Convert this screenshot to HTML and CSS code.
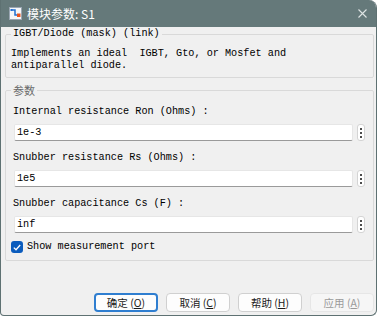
FILE: index.html
```html
<!DOCTYPE html>
<html>
<head>
    <title>模块参数: S1</title>
    <link rel="stylesheet" href="styles.css">
</head>
<body>
    <div class="window">
        <div class="titlebar">
            <svg class="app-icon" width="13" height="13" viewBox="0 0 13 13">
                <rect x="0.5" y="0.5" width="12" height="12" fill="#f4f6f8" stroke="#9aa6b2"/>
                <path d="M2 3 H6 V8 H8" fill="none" stroke="#1f6fd1" stroke-width="1.5"/>
                <rect x="1.5" y="2" width="2" height="2" fill="#1f6fd1"/>
                <rect x="8" y="6.5" width="3.5" height="3.5" fill="#e8541e"/>
            </svg>
            <span class="title">模块参数: S1</span>
            <svg class="close" width="9" height="9" viewBox="0 0 9 9">
                <path d="M0.5 0.5 L8.5 8.5 M8.5 0.5 L0.5 8.5" stroke="#dde3e3" stroke-width="1.1"/>
            </svg>
        </div>

        <div class="content">
            <fieldset class="group desc">
                <legend>IGBT/Diode (mask) (link)</legend>
                <div class="desc-text">Implements an ideal  IGBT, Gto, or Mosfet and<br>antiparallel diode.</div>
            </fieldset>

            <fieldset class="group params">
                <legend class="cjk-legend">参数</legend>

                <div class="param">
                    <div class="param-label">Internal resistance Ron (Ohms) :</div>
                    <div class="param-row">
                        <input class="param-input" type="text" value="1e-3">
                        <button class="more"><span></span><span></span><span></span></button>
                    </div>
                </div>

                <div class="param">
                    <div class="param-label">Snubber resistance Rs (Ohms) :</div>
                    <div class="param-row">
                        <input class="param-input" type="text" value="1e5">
                        <button class="more"><span></span><span></span><span></span></button>
                    </div>
                </div>

                <div class="param">
                    <div class="param-label">Snubber capacitance Cs (F) :</div>
                    <div class="param-row">
                        <input class="param-input" type="text" value="inf">
                        <button class="more"><span></span><span></span><span></span></button>
                    </div>
                </div>

                <label class="check">
                    <span class="box">
                        <svg width="8" height="7" viewBox="0 0 8 7">
                            <path d="M0.8 3.6 L3 5.8 L7.2 1" fill="none" stroke="#fff" stroke-width="1.3"/>
                        </svg>
                    </span>
                    Show measurement port
                </label>
            </fieldset>
        </div>

        <div class="footer">
            <button class="btn default">确定 (<u>O</u>)</button>
            <button class="btn">取消 (<u>C</u>)</button>
            <button class="btn">帮助 (<u>H</u>)</button>
            <button class="btn disabled">应用 (<u>A</u>)</button>
        </div>
    </div>
</body>
</html>
```

FILE: styles.css
```css
body {
    margin: 0;
    background: #ffffff;
}
.window {
    width: 377px;
    height: 316px;
    box-sizing: border-box;
    display: flex;
    flex-direction: column;
    background: #f0f0f0;
    border: 1px solid #5e7172;
    border-top: none;
    border-radius: 0 8px 6px 4px;
    overflow: hidden;
    font-family: "Liberation Mono", monospace;
    font-size: 10.2px;
    color: #000;
}
.titlebar {
    height: 27px;
    flex: none;
    display: flex;
    align-items: center;
    background: #65797a;
    padding-left: 9px;
    margin: 0 -1px;
}
.app-icon {
    flex: none;
}
.title {
    margin-left: 5px;
    color: #ffffff;
    font-family: "Noto Sans CJK SC", "Noto Sans", sans-serif;
    font-size: 12px;
}
.close {
    margin-left: auto;
    margin-right: 10px;
}
.content {
    padding: 1px 2px 0 4px;
}
.group {
    margin: 0;
    border: 1px solid #d9d9d9;
    border-radius: 2px;
    padding: 0 8px 0 5px;
}
.group legend {
    padding: 0 2px;
    margin-left: 0;
    line-height: 12px;
}
.desc {
    padding-top: 8px;
    padding-bottom: 5px;
}
.desc-text {
    line-height: 12px;
    white-space: pre;
}
.params {
    margin-top: 6px;
    padding-top: 10px;
    padding-bottom: 7px;
}
.cjk-legend {
    font-family: "Noto Sans CJK SC", sans-serif;
    font-size: 11px;
    color: #6a6a6a;
}
.param {
    margin-bottom: 11px;
}
.param-label {
    line-height: 12px;
    padding-left: 2px;
    margin-bottom: 6px;
}
.param-row {
    display: flex;
    align-items: center;
    gap: 4px;
    padding-left: 3px;
}
.param-input {
    flex: 1;
    height: 17px;
    box-sizing: border-box;
    margin: 0;
    padding: 0 2px;
    border: 1px solid #e6e6e6;
    border-bottom: 1px solid #9a9a9a;
    border-radius: 2px;
    background: #ffffff;
    font-family: "Liberation Mono", monospace;
    font-size: 10.2px;
    color: #000;
    outline: none;
}
.more {
    width: 8px;
    height: 17px;
    box-sizing: border-box;
    padding: 0;
    border: 1px solid #d4d4d4;
    border-radius: 3px;
    background: #ffffff;
    display: flex;
    flex-direction: column;
    align-items: center;
    justify-content: center;
    gap: 2px;
}
.more span {
    width: 2px;
    height: 2px;
    background: #111;
    border-radius: 1px;
}
.check {
    display: flex;
    align-items: center;
    gap: 4px;
    margin-top: -3px;
    line-height: 12px;
}
.box {
    width: 12px;
    height: 12px;
    box-sizing: border-box;
    border-radius: 3px;
    background: #0b5cbd;
    display: flex;
    align-items: center;
    justify-content: center;
}
.footer {
    margin-top: auto;
    display: flex;
    justify-content: flex-end;
    gap: 8px;
    padding: 0 2px 3px 0;
}
.btn {
    width: 64px;
    height: 19px;
    box-sizing: border-box;
    padding: 0;
    border: 1px solid #d0d0d0;
    border-radius: 4px;
    background: #fdfdfd;
    font-family: "Noto Sans CJK SC", sans-serif;
    font-size: 10.5px;
    color: #1a1a1a;
    line-height: 16px;
}
.btn.default {
    border: 2px solid #2f7ed0;
}
.btn.disabled {
    border-color: #e6e6e6;
    background: #f6f6f6;
    color: #9a9a9a;
}
```
